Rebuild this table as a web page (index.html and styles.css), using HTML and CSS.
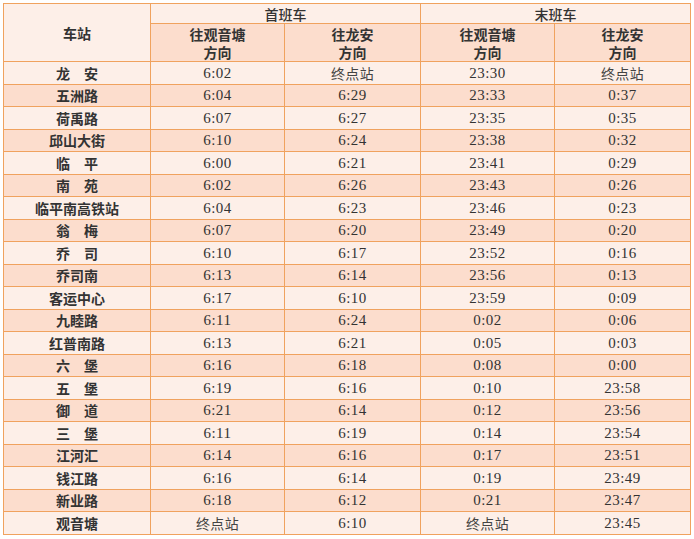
FILE: index.html
```html
<!DOCTYPE html>
<html lang="zh-CN">
<head>
<meta charset="utf-8">
<title>首末班车时刻表</title>
<link rel="stylesheet" href="styles.css">
</head>
<body>
<table class="timetable">
  <colgroup>
    <col class="c-station">
    <col class="c-a">
    <col class="c-b">
    <col class="c-c">
    <col class="c-d">
  </colgroup>
  <thead>
    <tr class="h1">
      <th rowspan="2" class="station-head">车站</th>
      <th colspan="2" class="group">首班车</th>
      <th colspan="2" class="group">末班车</th>
    </tr>
    <tr class="h2">
      <th class="dir">往观音塘<br>方向</th>
      <th class="dir">往龙安<br>方向</th>
      <th class="dir">往观音塘<br>方向</th>
      <th class="dir">往龙安<br>方向</th>
    </tr>
  </thead>
  <tbody>
    <tr class="odd"><td class="st">龙　安</td><td>6:02</td><td class="cn">终点站</td><td>23:30</td><td class="cn">终点站</td></tr>
    <tr class="even"><td class="st">五洲路</td><td>6:04</td><td>6:29</td><td>23:33</td><td>0:37</td></tr>
    <tr class="odd"><td class="st">荷禹路</td><td>6:07</td><td>6:27</td><td>23:35</td><td>0:35</td></tr>
    <tr class="even"><td class="st">邱山大街</td><td>6:10</td><td>6:24</td><td>23:38</td><td>0:32</td></tr>
    <tr class="odd"><td class="st">临　平</td><td>6:00</td><td>6:21</td><td>23:41</td><td>0:29</td></tr>
    <tr class="even"><td class="st">南　苑</td><td>6:02</td><td>6:26</td><td>23:43</td><td>0:26</td></tr>
    <tr class="odd"><td class="st">临平南高铁站</td><td>6:04</td><td>6:23</td><td>23:46</td><td>0:23</td></tr>
    <tr class="even"><td class="st">翁　梅</td><td>6:07</td><td>6:20</td><td>23:49</td><td>0:20</td></tr>
    <tr class="odd"><td class="st">乔　司</td><td>6:10</td><td>6:17</td><td>23:52</td><td>0:16</td></tr>
    <tr class="even"><td class="st">乔司南</td><td>6:13</td><td>6:14</td><td>23:56</td><td>0:13</td></tr>
    <tr class="odd"><td class="st">客运中心</td><td>6:17</td><td>6:10</td><td>23:59</td><td>0:09</td></tr>
    <tr class="even"><td class="st">九睦路</td><td>6:11</td><td>6:24</td><td>0:02</td><td>0:06</td></tr>
    <tr class="odd"><td class="st">红普南路</td><td>6:13</td><td>6:21</td><td>0:05</td><td>0:03</td></tr>
    <tr class="even"><td class="st">六　堡</td><td>6:16</td><td>6:18</td><td>0:08</td><td>0:00</td></tr>
    <tr class="odd"><td class="st">五　堡</td><td>6:19</td><td>6:16</td><td>0:10</td><td>23:58</td></tr>
    <tr class="even"><td class="st">御　道</td><td>6:21</td><td>6:14</td><td>0:12</td><td>23:56</td></tr>
    <tr class="odd"><td class="st">三　堡</td><td>6:11</td><td>6:19</td><td>0:14</td><td>23:54</td></tr>
    <tr class="even"><td class="st">江河汇</td><td>6:14</td><td>6:16</td><td>0:17</td><td>23:51</td></tr>
    <tr class="odd"><td class="st">钱江路</td><td>6:16</td><td>6:14</td><td>0:19</td><td>23:49</td></tr>
    <tr class="even"><td class="st">新业路</td><td>6:18</td><td>6:12</td><td>0:21</td><td>23:47</td></tr>
    <tr class="odd"><td class="st">观音塘</td><td class="cn">终点站</td><td>6:10</td><td class="cn">终点站</td><td>23:45</td></tr>
  </tbody>
</table>
</body>
</html>
```

FILE: styles.css
```css
html, body {
  margin: 0;
  padding: 0;
  background: #ffffff;
}

body {
  padding: 3px 0 0 3px;
}

.timetable {
  border-collapse: collapse;
  table-layout: fixed;
  width: 687px;
  color: #333333;
  font-family: "Liberation Serif", "Noto Sans CJK SC", serif;
  font-size: 15px;
}

.c-station { width: 147px; }
.c-a { width: 134px; }
.c-b { width: 136px; }
.c-c { width: 134px; }
.c-d { width: 136px; }

.timetable th,
.timetable td {
  border: 1px solid #f0a25e;
  padding: 0;
  text-align: center;
  vertical-align: middle;
}

.timetable th {
  font-family: "Noto Sans CJK SC", sans-serif;
  font-size: 14px;
  color: #333333;
}

.station-head {
  background: #fdefe8;
  font-weight: 700;
}

.h1 th.group {
  background: #fdefe8;
  height: 19px;
  line-height: 18px;
  font-weight: 500;
}

.h2 th.dir {
  background: #fcddcd;
  height: 36px;
  line-height: 18px;
  font-weight: 700;
  padding-top: 1px;
}

.timetable td {
  height: 21.5px;
  line-height: 20px;
  letter-spacing: 0.5px;
}

.odd td { background: #fdefe8; }
.even td { background: #fcddcd; }

.timetable td.st {
  font-family: "Noto Sans CJK SC", sans-serif;
  font-weight: 700;
  font-size: 14px;
  letter-spacing: 0;
}

.timetable td.cn {
  font-family: "Noto Sans CJK SC", sans-serif;
  font-size: 14px;
  letter-spacing: 0.3px;
  color: #444444;
}
```
